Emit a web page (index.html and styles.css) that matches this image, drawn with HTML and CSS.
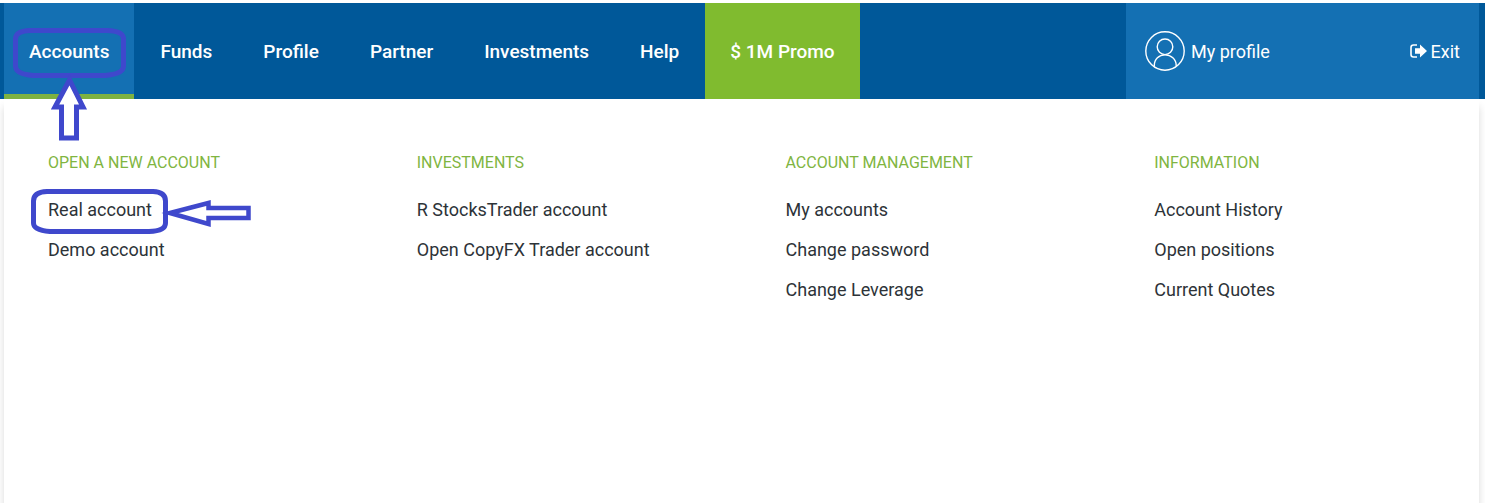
FILE: index.html
```
<!DOCTYPE html>
<html lang="en">

<head>
  <meta charset="UTF-8">
  <meta name="viewport" content="width=device-width, initial-scale=1.0">
  <title>Accounts</title>
  <link rel="stylesheet" href="styles.css">
</head>

<body>
  <header class="header">
    <nav class="nav">
      <a href="#" class="nav-link active">Accounts</a>
      <a href="#" class="nav-link">Funds</a>
      <a href="#" class="nav-link">Profile</a>
      <a href="#" class="nav-link">Partner</a>
      <a href="#" class="nav-link">Investments</a>
      <a href="#" class="nav-link">Help</a>
      <a href="#" class="nav-link promo">$ 1M Promo</a>
    </nav>
    <div class="user">
      <a href="#" class="user-link">
        <svg class="avatar" viewBox="0 0 40 40" fill="none" stroke="currentColor" stroke-width="1.4">
          <circle cx="20" cy="20" r="19.2" />
          <circle cx="20" cy="15.8" r="7.8" />
          <path d="M9.3 35.8V34.5C9.3 28 14 23.9 20 23.9S31.2 28 31.2 34.5V35.5" />
        </svg>
        My profile
      </a>
      <a href="#" class="user-link exit">
        <svg class="exit-icon" viewBox="0 0 17 14">
          <path d="M7 1H3.5Q1 1 1 3.5V10.5Q1 13 3.5 13H7" fill="none" stroke="currentColor" stroke-width="1.6" />
          <path d="M5 4.2H10V0.5L17 7L10 13.5V9.8H5Z" fill="currentColor" />
        </svg>
        Exit
      </a>
    </div>
  </header>

  <main class="menu">
    <section class="menu-col">
      <h2 class="menu-title">Open a new account</h2>
      <ul class="menu-list">
        <li><a href="#">Real account</a></li>
        <li><a href="#">Demo account</a></li>
      </ul>
    </section>
    <section class="menu-col">
      <h2 class="menu-title">Investments</h2>
      <ul class="menu-list">
        <li><a href="#">R StocksTrader account</a></li>
        <li><a href="#">Open CopyFX Trader account</a></li>
      </ul>
    </section>
    <section class="menu-col">
      <h2 class="menu-title">Account management</h2>
      <ul class="menu-list">
        <li><a href="#">My accounts</a></li>
        <li><a href="#">Change password</a></li>
        <li><a href="#">Change Leverage</a></li>
      </ul>
    </section>
    <section class="menu-col">
      <h2 class="menu-title">Information</h2>
      <ul class="menu-list">
        <li><a href="#">Account History</a></li>
        <li><a href="#">Open positions</a></li>
        <li><a href="#">Current Quotes</a></li>
      </ul>
    </section>
  </main>

  <!-- hand-drawn marks over the menu -->
  <svg class="marks" viewBox="0 0 260 250" fill="none" stroke="#3f48cc" stroke-width="5">
    <path d="M30 30.5H107Q123.5 31 123.5 39V66Q123.5 74 105 75.5H33Q15.5 74 15.5 66V39Q15.5 31 30 30.5Z" />
    <path d="M69.5 80L55 107H61.5V138H76.5V107H83Z" fill="#fff" />
    <path d="M47 191.5H153Q165.5 192 165.5 201V223Q165.5 231 149 231.5H50Q33.5 230 33.5 223V201Q33.5 192 47 191.5Z" />
    <path d="M170 213L208.5 203V208H248.5V218H208.5V224Z" stroke-width="4.5" />
  </svg>
</body>

</html>
```
FILE: styles.css
```
* {
  padding: 0;
  margin: 0;
  box-sizing: border-box;
}

body {
  position: relative;
  display: flex;
  flex-direction: column;
  min-height: 100vh;
  padding-top: 3px;
  background: #fff;
  font-family: Roboto, "Noto Sans", sans-serif;
  font-size: 18px;
  color: #2d3338;
  overflow-x: hidden;
}

a {
  color: inherit;
  text-decoration: none;
}

.header {
  display: flex;
  justify-content: space-between;
  height: 96px;
  padding: 0 6px 0 4px;
  background: #005899;
  color: #fff;
}

.nav {
  display: flex;
  gap: 1px;
}

.nav-link {
  display: flex;
  align-items: center;
  padding: 0 25px;
  font-size: 19px;
  font-weight: 500;
}

.nav-link.active {
  background: #1470b3;
  box-shadow: inset 0 -5px #7eb241;
}

.nav-link.promo {
  background: #80bb2f;
}

.user {
  display: flex;
  align-items: center;
  justify-content: space-between;
  width: 353px;
  padding: 0 19px;
  background: #1470b3;
}

.user-link {
  display: flex;
  align-items: center;
  gap: 6px;
}

.user-link.exit {
  gap: 4px;
}

.avatar {
  width: 40px;
  height: 40px;
}

.exit-icon {
  width: 17px;
  height: 14px;
}

.menu {
  flex: 1;
  display: grid;
  grid-template-columns: repeat(4, 1fr);
  margin: 0 6px 0 4px;
  padding-top: 52px;
  background: #fff;
  box-shadow: 0 8px 8px rgba(0, 0, 0, 0.15);
}

.menu-col {
  padding-left: 44px;
}

.menu-title {
  margin-bottom: 15px;
  font-size: 16px;
  font-weight: 400;
  line-height: 24px;
  text-transform: uppercase;
  color: #80b541;
}

.menu-list {
  list-style: none;
  line-height: 40px;
}

.marks {
  position: absolute;
  top: 0;
  left: 0;
  width: 260px;
  height: 250px;
  pointer-events: none;
}
```
